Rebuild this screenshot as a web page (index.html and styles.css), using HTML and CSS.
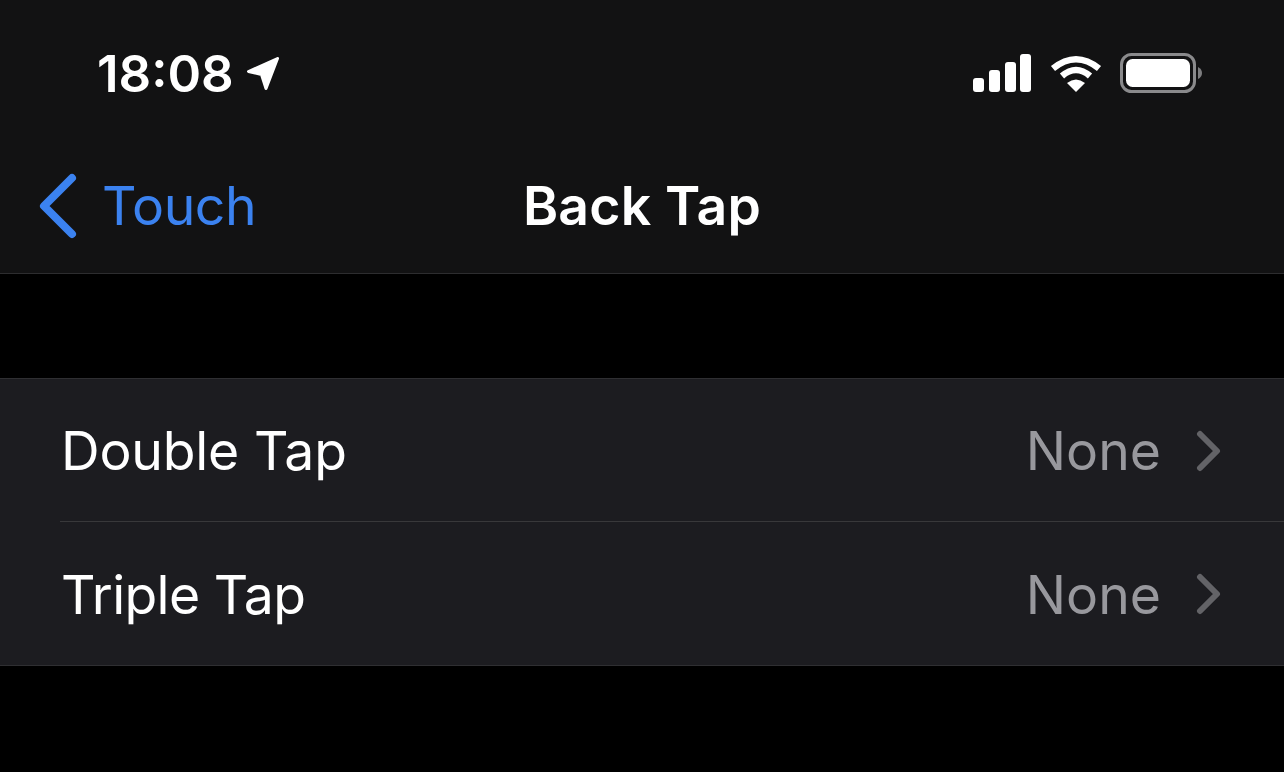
FILE: index.html
```html
<!DOCTYPE html>
<html lang="en">
<head>
<meta charset="utf-8">
<title>Back Tap</title>
<link rel="stylesheet" href="styles.css">
</head>
<body>
<header class="top">
  <div class="status">
    <div class="time-group">
      <span class="time">18:08</span>
      <svg class="loc" width="34" height="36" viewBox="0 0 34 36"><path d="M31.500 2.500 2.500 15.500 15.500 18.500 20 32.500Z" fill="#fff" stroke="#fff" stroke-width="3" stroke-linejoin="round"/></svg>
    </div>
    <div class="indicators">
      <svg class="signal" width="58" height="38" viewBox="0 0 58 38"><rect x="0" y="24" width="11" height="14" rx="3" fill="#fff"/><rect x="16" y="16" width="11" height="22" rx="3" fill="#fff"/><rect x="32" y="8" width="11" height="30" rx="3" fill="#fff"/><rect x="47" y="0" width="11" height="38" rx="3" fill="#fff"/></svg>
      <svg class="wifi" width="52" height="38" viewBox="0 0 52 38"><path d="M3 14.500Q26-4 49 14.500" fill="none" stroke="#fff" stroke-width="6.500"/><path d="M12 22Q26 10 40 22" fill="none" stroke="#fff" stroke-width="6.500"/><path d="M26 38 17 29Q26 22 35 29Z" fill="#fff"/></svg>
      <svg class="battery" width="82" height="40" viewBox="0 0 82 40"><rect x="1.500" y="1.500" width="73" height="37" rx="10" fill="none" stroke="#8a8a8c" stroke-width="3"/><rect x="6" y="6" width="64" height="28" rx="6.500" fill="#fff"/><path d="M78 14Q82 16 82 20T78 26Z" fill="#7d7d7f"/></svg>
    </div>
  </div>
  <nav class="nav">
    <a class="back">
      <svg width="40" height="66" viewBox="0 0 40 66"><path d="M34 5 6 33l28 28" fill="none" stroke="#3b82f0" stroke-width="8" stroke-linecap="round" stroke-linejoin="round"/></svg>
      <span>Touch</span>
    </a>
    <h1 class="title">Back Tap</h1>
  </nav>
</header>
<section class="list">
  <div class="row">
    <span class="label">Double Tap</span>
    <span class="value">None</span>
    <svg class="chev" width="26" height="42" viewBox="0 0 26 42"><path d="M4 4 21 21 4 38" fill="none" stroke="#636367" stroke-width="6" stroke-linecap="round" stroke-linejoin="round"/></svg>
  </div>
  <div class="row">
    <span class="label label-tight">Triple Tap</span>
    <span class="value">None</span>
    <svg class="chev" width="26" height="42" viewBox="0 0 26 42"><path d="M4 4 21 21 4 38" fill="none" stroke="#636367" stroke-width="6" stroke-linecap="round" stroke-linejoin="round"/></svg>
  </div>
</section>
</body>
</html>
```

FILE: styles.css
```css
* { box-sizing: border-box; }
html, body { margin: 0; height: 100%; }
body {
  background: #000;
  color: #fff;
  font-family: Inter, "Liberation Sans", sans-serif;
  overflow: hidden;
}
.top {
  height: 274px;
  background: #121213;
  border-bottom: 1px solid #2d2d2f;
}
.status {
  height: 146px;
  display: flex;
  justify-content: space-between;
  align-items: flex-start;
  padding: 53px 82px 0 97px;
}
.time-group { display: flex; align-items: center; gap: 12px; }
.time { font-size: 51px; font-weight: 600; line-height: 42px; }
.indicators { display: flex; align-items: center; gap: 18px; }
.signal { margin-right: 1px; }
.nav {
  height: 127px;
  position: relative;
  display: flex;
  align-items: flex-start;
  justify-content: center;
  padding-top: 27px;
}
.back {
  position: absolute;
  left: 38px;
  top: 27px;
  display: flex;
  align-items: center;
  gap: 24px;
  color: #3b82f0;
  font-size: 53.500px;
  line-height: 66px;
  letter-spacing: -0.4px;
}
.title { margin: 0; font-size: 53.500px; font-weight: 600; line-height: 66px; letter-spacing: 0.2px; }
.list {
  margin-top: 104px;
  background: #1c1c20;
  border-top: 1px solid #2f2f32;
  border-bottom: 1px solid #2f2f32;
}
.row {
  height: 143px;
  display: flex;
  align-items: center;
  padding: 0 62px 0 61px;
  position: relative;
  font-size: 53.500px;
}
.row:first-child::after {
  content: "";
  position: absolute;
  left: 60px;
  right: 0;
  bottom: 0;
  height: 1px;
  background: #38383a;
}
.row:last-child .label, .row:last-child .value { position: relative; top: 1px; }
.label { flex: 1; letter-spacing: -0.2px; }
.label-tight { letter-spacing: -0.65px; }
.value { color: #98989d; margin-right: 35px; }
```
